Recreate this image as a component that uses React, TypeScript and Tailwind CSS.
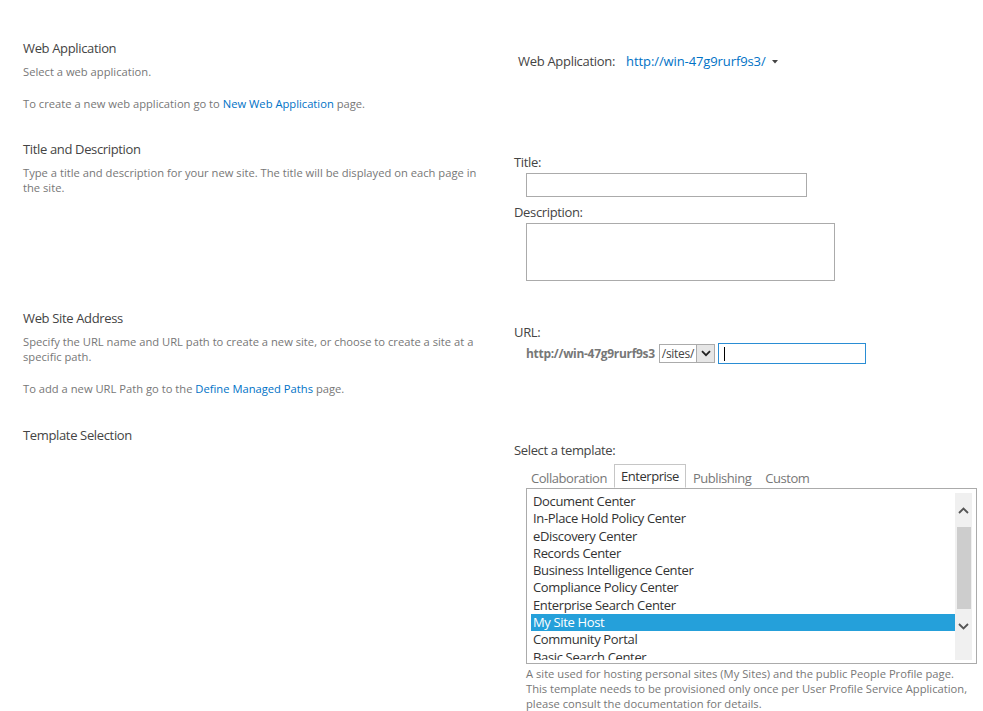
import React from "react";

const font = { fontFamily: '"Open Sans", "Noto Sans", "Liberation Sans", sans-serif' };

function Title({ children }: { children: React.ReactNode }) {
  return <div className="text-[13px] leading-[17px] tracking-[-0.35px] text-[#444]">{children}</div>;
}
function Desc({ children }: { children: React.ReactNode }) {
  return <div className="text-[11.2px] leading-[15px] text-[#777] whitespace-nowrap">{children}</div>;
}
function A({ children }: { children: React.ReactNode }) {
  return <span className="text-[#0072c6]">{children}</span>;
}

const items = [
  "Document Center",
  "In-Place Hold Policy Center",
  "eDiscovery Center",
  "Records Center",
  "Business Intelligence Center",
  "Compliance Policy Center",
  "Enterprise Search Center",
  "My Site Host",
  "Community Portal",
  "Basic Search Center",
];

export default function App() {
  return (
    <div className="w-[983px] h-[711px] bg-white overflow-hidden" style={font}>
      <div className="pt-[40px]">
        {/* Web Application */}
        <div className="flex h-[101px]">
          <div className="w-[491px] pl-[23px] pr-[14px]">
            <Title>Web Application</Title>
            <div className="mt-[7px]"><Desc>Select a web application.</Desc></div>
            <div className="mt-[17px]"><Desc>To create a new web application go to <A>New Web Application</A> page.</Desc></div>
          </div>
          <div className="flex-1 pl-[27px] pt-[12px]">
            <div className="flex items-center text-[13px] leading-[18px]">
              <span className="text-[#444] tracking-[-0.3px]">Web Application:</span>
              <span className="ml-[11px] text-[#0072c6] tracking-[-0.1px]">http://win-47g9rurf9s3/</span>
              <svg width="6" height="4" viewBox="0 0 6 4" className="ml-[6px] mt-[1px]">
                <path d="M0 0H6L3 3.5Z" fill="#444" />
              </svg>
            </div>
          </div>
        </div>

        {/* Title and Description */}
        <div className="flex h-[169px]">
          <div className="w-[491px] pl-[23px] pr-[14px]">
            <Title>Title and Description</Title>
            <div className="mt-[7px]">
              <Desc>
                Type a title and description for your new site. The title will be displayed on each page in
                <br />
                the site.
              </Desc>
            </div>
          </div>
          <div className="flex-1 pl-[23px] pt-[12px] text-[13px] leading-[18px] tracking-[-0.35px] text-[#444]">
            <div>Title:</div>
            <div className="ml-[12px] mt-[2px] w-[281px] h-[24px] border border-[#ababab] bg-white" />
            <div className="mt-[6px]">Description:</div>
            <div className="ml-[12px] mt-[2px] w-[309px] h-[58px] border border-[#ababab] bg-white" />
          </div>
        </div>

        {/* Web Site Address */}
        <div className="flex h-[117px]">
          <div className="w-[491px] pl-[23px] pr-[14px]">
            <Title>Web Site Address</Title>
            <div className="mt-[7px]">
              <Desc>
                Specify the URL name and URL path to create a new site, or choose to create a site at a
                <br />
                specific path.
              </Desc>
            </div>
            <div className="mt-[17px]"><Desc>To add a new URL Path go to the <A>Define Managed Paths</A> page.</Desc></div>
          </div>
          <div className="flex-1 pl-[23px] pt-[13px] text-[13px] leading-[18px] tracking-[-0.35px] text-[#444]">
            <div>URL:</div>
            <div className="ml-[12px] mt-[2px] flex items-center h-[21px]">
              <span className="text-[12px] font-bold tracking-[-0.3px] text-[#777]">http://win-47g9rurf9s3</span>
              <div className="ml-[4px] flex h-[19px] border border-[#ababab] bg-white">
                <span className="pl-[2px] pr-[2px] text-[12px] leading-[17px] tracking-[-0.3px] text-[#444]">/sites/</span>
                <div className="w-[18px] h-full bg-[#e6e6e6] border-l border-[#ababab] flex items-center justify-center">
                  <svg width="10" height="7" viewBox="0 0 10 7">
                    <path d="M1 1.2L5 5.2L9 1.2" fill="none" stroke="#222" strokeWidth="1.8" />
                  </svg>
                </div>
              </div>
              <div className="ml-[3px] w-[148px] h-[21px] border border-[#2a8dd4] bg-white flex items-center pl-[5px]">
                <div className="w-px h-[14px] bg-black" />
              </div>
            </div>
          </div>
        </div>

        {/* Template Selection */}
        <div className="flex">
          <div className="w-[491px] pl-[23px] pr-[14px]">
            <Title>Template Selection</Title>
          </div>
          <div className="flex-1 pl-[23px] pt-[14px] text-[13px] leading-[18px] tracking-[-0.35px] text-[#444]">
            <div>Select a template:</div>
            <div className="ml-[12px] mt-[6px] w-[451px]">
              <div className="flex h-[23px] items-end relative z-10 -ml-[2px] tracking-[-0.45px]">
                <div className="px-[6px] h-[22px] leading-[22px] text-[#777] border border-transparent">Collaboration</div>
                <div className="px-[6px] h-[24px] leading-[22px] text-[#333] border border-[#c6c6c6] border-b-white bg-white">Enterprise</div>
                <div className="px-[6px] h-[22px] leading-[22px] text-[#777] border border-transparent">Publishing</div>
                <div className="px-[6px] h-[22px] leading-[22px] text-[#777] border border-transparent">Custom</div>
              </div>
              <div className="h-[176px] border border-[#ababab] bg-white flex pl-[4px] pt-[4px] pr-[4px] pb-[3px]">
                <div className="flex-1 overflow-hidden">
                  {items.map((it) => (
                    <div
                      key={it}
                      className={
                        "h-[17.3px] leading-[17px] pl-[2px] whitespace-nowrap " +
                        (it === "My Site Host" ? "bg-[#25a0da] text-white" : "text-[#333]")
                      }
                    >
                      {it}
                    </div>
                  ))}
                </div>
                <div className="w-[17px] bg-[#f0f0f0] flex flex-col items-center">
                  <div className="h-[34px] w-full flex items-center justify-center">
                    <svg width="11" height="7" viewBox="0 0 11 7">
                      <path d="M1 6L5.5 1.5L10 6" fill="none" stroke="#555" strokeWidth="1.8" />
                    </svg>
                  </div>
                  <div className="w-[14px] h-[82px] bg-[#cdcdcd]" />
                  <div className="h-[34px] w-full flex items-center justify-center">
                    <svg width="11" height="7" viewBox="0 0 11 7">
                      <path d="M1 1L5.5 5.5L10 1" fill="none" stroke="#555" strokeWidth="1.8" />
                    </svg>
                  </div>
                </div>
              </div>
              <div className="mt-[2px] text-[11.2px] leading-[15px] tracking-normal text-[#777] whitespace-nowrap">
                A site used for hosting personal sites (My Sites) and the public People Profile page.
                <br />
                This template needs to be provisioned only once per User Profile Service Application,
                <br />
                please consult the documentation for details.
              </div>
            </div>
          </div>
        </div>
      </div>
    </div>
  );
}
